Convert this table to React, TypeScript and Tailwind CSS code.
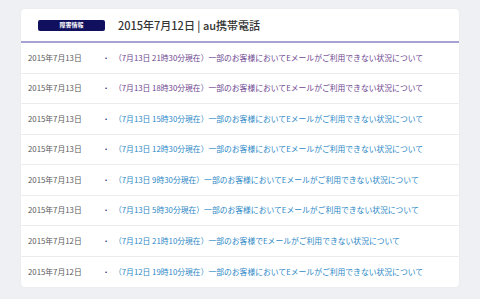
const ROWS = [
  { date: "2015年7月13日", time: "7月13日 21時30分現在", body: "一部のお客様においてEメールがご利用できない状況について", visited: true },
  { date: "2015年7月13日", time: "7月13日 18時30分現在", body: "一部のお客様においてEメールがご利用できない状況について", visited: true },
  { date: "2015年7月13日", time: "7月13日 15時30分現在", body: "一部のお客様においてEメールがご利用できない状況について" },
  { date: "2015年7月13日", time: "7月13日 12時30分現在", body: "一部のお客様においてEメールがご利用できない状況について" },
  { date: "2015年7月13日", time: "7月13日 9時30分現在", body: "一部のお客様においてEメールがご利用できない状況について" },
  { date: "2015年7月13日", time: "7月13日 5時30分現在", body: "一部のお客様においてEメールがご利用できない状況について" },
  { date: "2015年7月12日", time: "7月12日 21時10分現在", body: "一部のお客様でEメールがご利用できない状況について" },
  { date: "2015年7月12日", time: "7月12日 19時10分現在", body: "一部のお客様においてEメールがご利用できない状況について" },
];

export default function App() {
  return (
    <div
      className="h-[299px] w-[480px] bg-[#eef0f4] px-[21px] pt-[9px]"
      style={{ fontFamily: '"Noto Sans CJK JP", "Noto Sans", sans-serif' }}
    >
      <div className="overflow-hidden rounded-[4px] bg-white shadow-[0_0_2px_rgba(0,0,0,0.06)]">
        <div className="flex h-[34px] items-center border-b-2 border-[#a4a3d2] pl-[17px]">
          <span className="flex h-[11px] w-[67px] items-center justify-center rounded-[2px] bg-[#10105e] text-[6px] font-bold leading-none text-white">
            障害情報
          </span>
          <span className="ml-[13px] whitespace-pre text-[11px] font-medium leading-none text-[#333]">2015年7月12日 | au携帯電話</span>
        </div>
        {ROWS.map((r, i) => (
          <div
            key={i}
            className={`flex h-[30.5px] items-center text-[7.8px] leading-none ${i < ROWS.length - 1 ? "border-b border-[#ececec]" : ""}`}
          >
            <span className="w-[84px] shrink-0 pl-[7px] text-[#5a5a5a]">{r.date}</span>
            <span className="w-[9px] shrink-0 text-[6px] text-[#1a237e]">•</span>
            <span className={r.visited ? "text-[#6d4590]" : "text-[#2c88c6]"}>
              （{r.time}）{r.body}
            </span>
          </div>
        ))}
      </div>
    </div>
  );
}
